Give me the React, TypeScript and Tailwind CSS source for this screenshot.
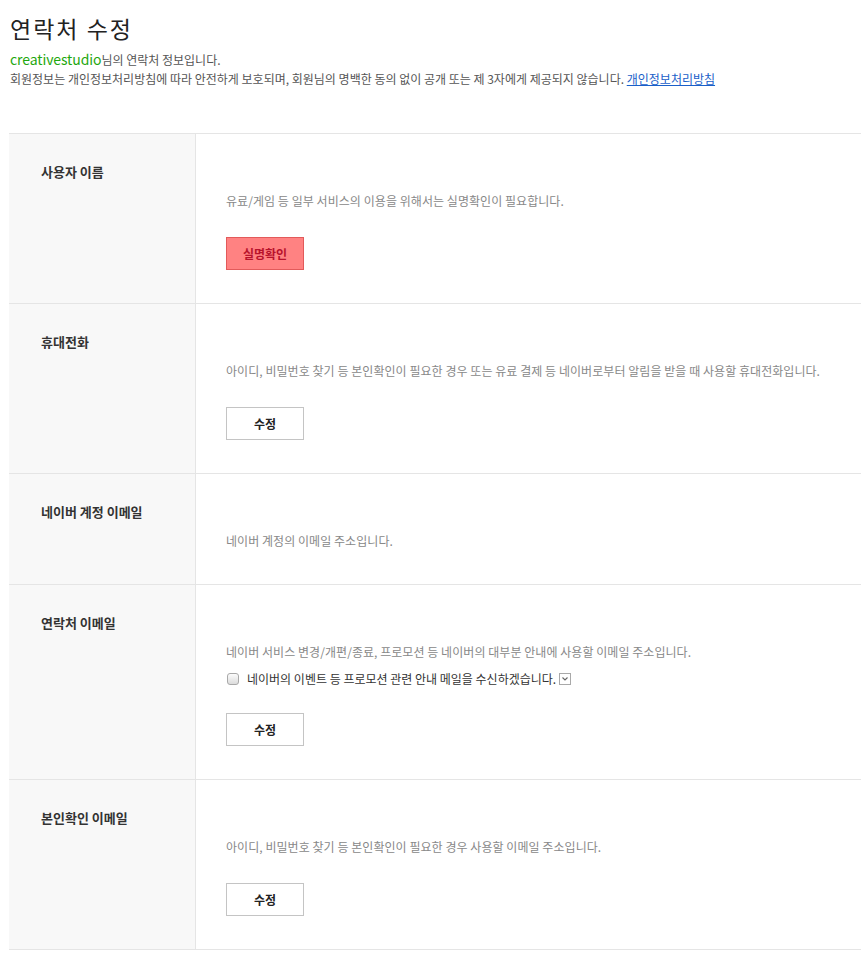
import React from "react";

const font = { fontFamily: '"Noto Sans CJK KR", "Noto Sans", sans-serif' };

function Btn({ children, red }: { children: React.ReactNode; red?: boolean }) {
  return red ? (
    <button className="w-[78px] h-[33px] border border-[#e25a5a] bg-[#ff8282] text-[#b8122c] text-[12px] font-bold leading-none">
      {children}
    </button>
  ) : (
    <button className="w-[78px] h-[33px] border border-[#c4c4c4] bg-white text-[#222] text-[12px] font-bold leading-none">
      {children}
    </button>
  );
}

function Row({ label, children }: { label: string; children: React.ReactNode }) {
  return (
    <div className="flex border-b border-[#e5e5e5]">
      <div className="w-[187px] shrink-0 bg-[#f8f8f8] border-r border-[#e5e5e5] pl-[32px] pt-[28px] text-[13px] font-bold text-[#333] leading-[20px]">
        {label}
      </div>
      <div className="flex-1 pl-[30px] pt-[57px] pb-[33px]">{children}</div>
    </div>
  );
}

function Desc({ children }: { children: React.ReactNode }) {
  return <p className="text-[12px] leading-[20px] text-[#888] tracking-[0.05px]">{children}</p>;
}

export default function App() {
  return (
    <div className="w-[868px] min-h-[962px] bg-white" style={font}>
      <div className="pl-[9px] pr-[7px]">
        <h1 className="pl-[1px] pt-[13px] text-[23px] leading-[30px] text-[#222] font-normal tracking-[2px]">연락처 수정</h1>
        <p className="pl-[1px] mt-[7px] text-[12px] leading-[19px] text-[#555] tracking-[0px]">
          <span className="text-[#1fa80f] text-[14px] tracking-[-0.1px]">creativestudio</span>님의 연락처 정보입니다.
        </p>
        <p className="pl-[1px] text-[12px] leading-[19px] text-[#555] tracking-[0px]">
          회원정보는 개인정보처리방침에 따라 안전하게 보호되며, 회원님의 명백한 동의 없이 공개 또는 제 3자에게 제공되지 않습니다.{" "}
          <a className="text-[#1a5fc9] underline">개인정보처리방침</a>
        </p>
        <div className="mt-[45px] border-t border-[#e5e5e5]">
          <Row label="사용자 이름">
            <Desc>유료/게임 등 일부 서비스의 이용을 위해서는 실명확인이 필요합니다.</Desc>
            <div className="mt-[26px]">
              <Btn red>실명확인</Btn>
            </div>
          </Row>
          <Row label="휴대전화">
            <Desc>아이디, 비밀번호 찾기 등 본인확인이 필요한 경우 또는 유료 결제 등 네이버로부터 알림을 받을 때 사용할 휴대전화입니다.</Desc>
            <div className="mt-[26px]">
              <Btn>수정</Btn>
            </div>
          </Row>
          <Row label="네이버 계정 이메일">
            <Desc>네이버 계정의 이메일 주소입니다.</Desc>
          </Row>
          <Row label="연락처 이메일">
            <Desc>네이버 서비스 변경/개편/종료, 프로모션 등 네이버의 대부분 안내에 사용할 이메일 주소입니다.</Desc>
            <div className="mt-[7px] flex items-center h-[20px]">
              <span className="w-[12px] h-[12px] rounded-[3px] border border-[#a9a9a9] bg-gradient-to-b from-[#fcfcfc] to-[#dcdcdc] ml-[1px]" />
              <span className="ml-[8px] text-[12px] text-[#333] tracking-[0px]">네이버의 이벤트 등 프로모션 관련 안내 메일을 수신하겠습니다.</span>
              <span className="ml-[3px] w-[12px] h-[12px] border border-[#a9a9a9] bg-white flex items-center justify-center">
                <svg width="8" height="6" viewBox="0 0 8 6">
                  <path d="M1.5 1.5 L4 4 L6.5 1.5" fill="none" stroke="#666" strokeWidth="1.1" />
                </svg>
              </span>
            </div>
            <div className="mt-[24px]">
              <Btn>수정</Btn>
            </div>
          </Row>
          <Row label="본인확인 이메일">
            <Desc>아이디, 비밀번호 찾기 등 본인확인이 필요한 경우 사용할 이메일 주소입니다.</Desc>
            <div className="mt-[26px]">
              <Btn>수정</Btn>
            </div>
          </Row>
        </div>
      </div>
    </div>
  );
}
